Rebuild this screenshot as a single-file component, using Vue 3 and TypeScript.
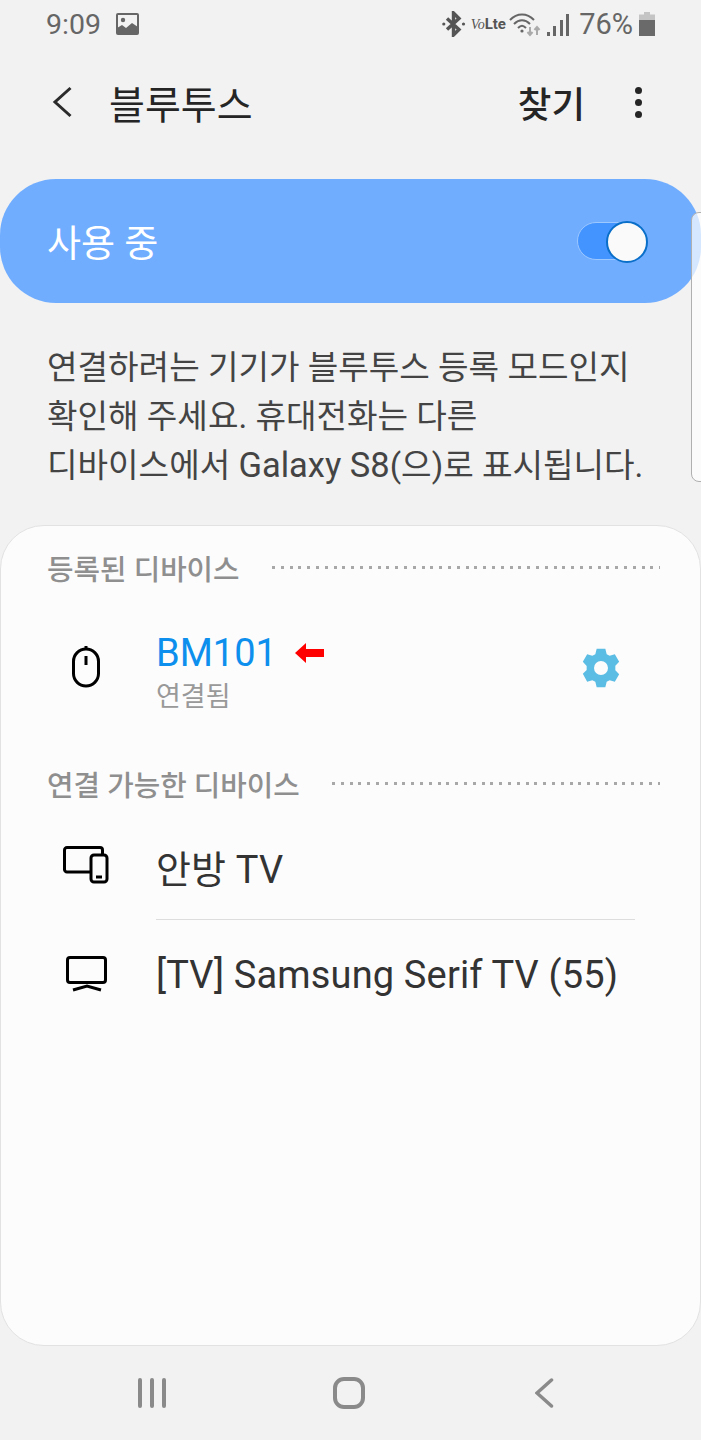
<script setup lang="ts">
type Device = { name: string; icon: 'devices' | 'tv' }

const available: Device[] = [
  { name: '안방 TV', icon: 'devices' },
  { name: '[TV] Samsung Serif TV (55)', icon: 'tv' }
]
</script>

<template>
  <div class="screen">
    <div class="status">
      <div class="status-left">
        <span class="time">9:09</span>
        <svg class="pic" width="24" height="23" viewBox="0 0 24 23">
          <rect x="0" y="0" width="23" height="22" rx="2" fill="#666" />
          <rect x="2" y="2" width="19" height="17" fill="#f2f2f2" />
          <circle cx="7" cy="7" r="2.2" fill="#666" />
          <path d="M1 20V15l5-3 4 3 6-5 6 4v6z" fill="#666" />
        </svg>
      </div>
      <div class="status-right">
        <svg width="24" height="26" viewBox="0 0 24 26" fill="none" stroke="#555">
          <path d="M5 7.500 17 18.500 11.500 24V2l5.500 5.500L5 18.500" stroke-width="3.400" />
          <circle cx="1.800" cy="13" r="1.600" fill="#555" stroke="none" />
          <circle cx="21.500" cy="13" r="1.600" fill="#555" stroke="none" />
        </svg>
        <span class="volte"><i>Vo</i><b>Lte</b></span>
        <svg class="wifi" width="32" height="26" viewBox="0 0 32 26" fill="none" stroke="#666" stroke-width="2">
          <path d="M1 9c7-7.500 17-7.500 24 0" />
          <path d="M5 13c5-5 11-5 16 0" />
          <path d="M9 17c3-3 5-3 8 0" />
          <circle cx="13" cy="20" r="1.600" fill="#666" stroke="none" />
          <path d="M21 16v8M18.500 21l2.500 3 2.500-3" stroke="#aaa" />
          <path d="M28 24v-8M25.500 19l2.500-3 2.500 3" stroke="#aaa" />
        </svg>
        <div class="signal">
          <span style="height: 4px" />
          <span style="height: 10px" />
          <span style="height: 16px" />
          <span style="height: 22px" />
        </div>
        <span class="pct">76%</span>
        <svg class="batt" width="16" height="24" viewBox="0 0 16 24">
          <path d="M5 0h6v2.500h5V24H0V2.500h5z" fill="#c4c4c4" />
          <rect x="0" y="8" width="16" height="16" fill="#6a6a6a" />
        </svg>
      </div>
    </div>

    <header class="appbar">
      <svg class="back" width="22" height="32" viewBox="0 0 22 32" fill="none" stroke="#2b2b2b" stroke-width="3">
        <path d="M18.500 2 3 16l15.500 14" />
      </svg>
      <h1>블루투스</h1>
      <span class="find">찾기</span>
      <div class="dots"><span /><span /><span /></div>
    </header>

    <div class="master">
      <span>사용 중</span>
      <div class="switch"><div class="knob" /></div>
    </div>

    <p class="hint">연결하려는 기기가 블루투스 등록 모드인지<br />확인해 주세요. 휴대전화는 다른<br />디바이스에서 <span class="latin">Galaxy S8</span>(으)로 표시됩니다.</p>

    <main class="card">
      <div class="section">
        <span>등록된 디바이스</span>
        <i class="dotline" />
      </div>
      <div class="paired">
        <svg class="ic" width="28" height="42" viewBox="0 0 28 42" fill="none" stroke="#000" stroke-width="3">
          <rect x="1.500" y="3" width="25" height="37" rx="12.500" />
          <path d="M14 0v3M14 10v9" />
        </svg>
        <div class="paired-text">
          <div class="paired-name">BM101
            <svg class="arrow" width="29" height="20" viewBox="0 0 29 20"><path d="M0 10 11 0v6h18v8H11v6z" fill="#f00" /></svg>
          </div>
          <div class="paired-sub">연결됨</div>
        </div>
        <svg class="gear" width="40" height="40" viewBox="0 0 24 24">
          <path fill="#5bbce4" fill-rule="evenodd" d="M9.400 .5h5.200l.8 3.200 1.800 1 3.100-.9 2.600 4.500-2.300 2.300v2.800l2.300 2.300-2.600 4.500-3.100-.9-1.800 1-.8 3.200H9.400l-.8-3.200-1.800-1-3.100.9L1.100 15.500l2.300-2.300v-2.400L1.100 8.300l2.600-4.500 3.100.9 1.800-1zM12 7.800a4.200 4.200 0 1 0 0 8.400 4.200 4.200 0 0 0 0-8.400z" />
        </svg>
      </div>

      <div class="section">
        <span>연결 가능한 디바이스</span>
        <i class="dotline" />
      </div>
      <div class="rows">
        <div v-for="(item, index) in available" :key="item.name" class="row" :class="{ last: index === available.length - 1 }">
          <svg v-if="item.icon === 'devices'" class="ic-wide" width="46" height="38" viewBox="0 0 46 38" fill="none" stroke="#000" stroke-width="3">
            <path d="M27 26H4a2.500 2.500 0 0 1-2.500-2.500V4A2.500 2.500 0 0 1 4 1.500h33A2.500 2.500 0 0 1 39.500 4v4" />
            <rect x="28" y="9" width="16" height="27" rx="3" />
            <path d="M33 31h6" />
          </svg>
          <svg v-else class="ic-wide" width="46" height="38" viewBox="0 0 46 38" fill="none" stroke="#000" stroke-width="3">
            <rect x="4.500" y="2.500" width="38" height="25" rx="2.500" />
            <path d="M10 35 24 31 38 35" />
          </svg>
          <div class="row-name">{{ item.name }}</div>
        </div>
      </div>
    </main>

    <nav class="navbar">
      <svg width="30" height="30" viewBox="0 0 30 30" stroke="#8a8a8a" stroke-width="4" stroke-linecap="round">
        <path d="M3 2v26M15 2v26M27 2v26" />
      </svg>
      <svg class="home" width="32" height="32" viewBox="0 0 32 32" fill="none" stroke="#8a8a8a" stroke-width="4">
        <rect x="2" y="2" width="28" height="28" rx="9" />
      </svg>
      <svg width="20" height="30" viewBox="0 0 20 30" fill="none" stroke="#8a8a8a" stroke-width="3.500" stroke-linecap="round">
        <path d="M16.500 2 2 15l14.500 13" />
      </svg>
    </nav>

    <div class="edge" />
  </div>
</template>

<style scoped>
.screen {
  position: relative;
  width: 701px;
  height: 1440px;
  overflow: hidden;
  background: #f2f2f2;
  font-family: Roboto, "Noto Sans CJK KR", sans-serif;
  color: #252525;
}

.status {
  height: 48px;
  padding: 0 46px;
  display: flex;
  justify-content: space-between;
  align-items: center;
  color: #666;
}

.status-left,
.status-right {
  display: flex;
  align-items: center;
}

.time {
  font-size: 28.500px;
  margin-right: 15px;
}

.volte {
  width: 30px;
  margin-left: 5px;
  font-size: 14px;
  color: #555;
  font-family: "Liberation Serif", serif;
  white-space: nowrap;
}

.volte b {
  font-family: Roboto, sans-serif;
  font-size: 15px;
}

.wifi {
  margin-left: 8px;
}

.signal {
  display: flex;
  align-items: flex-end;
  gap: 3.500px;
  height: 24px;
  margin-left: 6px;
}

.signal span {
  width: 3px;
  background: #666;
}

.pct {
  font-size: 29px;
  margin-left: 10px;
}

.batt {
  margin-left: 6px;
}

.appbar {
  height: 108px;
  padding: 0 59px 0 52px;
  display: flex;
  align-items: center;
  margin-bottom: 23px;
}

.back {
  margin-right: 35px;
}

h1 {
  flex: 1;
  margin: 0;
  font-size: 39px;
  font-weight: 400;
}

.find {
  font-size: 36.500px;
  font-weight: 500;
  margin-right: 50px;
}

.dots {
  display: flex;
  flex-direction: column;
  gap: 5px;
}

.dots span {
  width: 7px;
  height: 7px;
  border-radius: 50%;
  background: #252525;
}

.master {
  height: 124px;
  box-sizing: border-box;
  padding: 0 54px 0 47px;
  border-radius: 56px;
  background: #70adff;
  color: #fff;
  font-size: 37px;
  display: flex;
  justify-content: space-between;
  align-items: center;
}

.switch {
  position: relative;
  width: 70px;
  height: 38px;
  box-sizing: border-box;
  border: 1.500px solid #9cc7ff;
  border-radius: 19px;
  background: #4494ff;
}

.knob {
  position: absolute;
  right: -2px;
  top: -2.500px;
  width: 42px;
  height: 42px;
  box-sizing: border-box;
  border: 2px solid #0a6fc9;
  border-radius: 50%;
  background: #fafafa;
}

.hint {
  margin: 40px 0 35px 47px;
  font-size: 33.200px;
  line-height: 49px;
  color: #444;
  white-space: nowrap;
}

.latin {
  font-size: 34.500px;
}

.card {
  height: 821px;
  box-sizing: border-box;
  padding: 23px 40px 0 46px;
  background: #fcfcfc;
  border: 1px solid #e2e2e2;
  border-radius: 44px;
}

.section {
  display: flex;
  align-items: center;
  gap: 32px;
  height: 36px;
  font-size: 28.800px;
  font-weight: 500;
  color: #8f8f8f;
}

.dotline {
  flex: 1;
  height: 3px;
  background: repeating-linear-gradient(90deg, #a8a8a8 0 3px, transparent 3px 8.800px);
}

.paired {
  height: 180px;
  box-sizing: border-box;
  display: flex;
  align-items: center;
  padding: 0 39px 5px 25px;
}

.paired .ic {
  margin-right: 56px;
  margin-top: -11px;
}

.paired-text {
  flex: 1;
}

.paired-name {
  font-size: 38px;
  line-height: 48px;
  color: #0d8fee;
  display: flex;
  align-items: center;
  gap: 18px;
}

.paired-sub {
  margin-top: 1px;
  font-size: 27px;
  line-height: 38px;
  color: #999;
}

.gear {
  margin-top: -9px;
}

.rows {
  padding-top: 12px;
}

.row {
  height: 106px;
  margin-left: 109px;
  margin-right: 25px;
  display: flex;
  align-items: center;
  position: relative;
  border-bottom: 1px solid #ddd;
}

.row.last {
  margin-top: 2px;
  border-bottom: 0;
}

.ic-wide {
  position: absolute;
  left: -93px;
  top: 33px;
}

.row-name {
  font-size: 38px;
  letter-spacing: 0.150px;
  white-space: nowrap;
  color: #333;
}

.navbar {
  height: 94px;
  padding: 0 146px 0 137px;
  display: flex;
  align-items: center;
  justify-content: space-between;
}

.home {
  margin-right: 5px;
}

.edge {
  position: absolute;
  right: -10px;
  top: 212px;
  width: 20px;
  height: 270px;
  box-sizing: border-box;
  border: 1px solid #b0b0b0;
  border-radius: 8px;
  background: rgba(255, 255, 255, 0.7);
}
</style>
